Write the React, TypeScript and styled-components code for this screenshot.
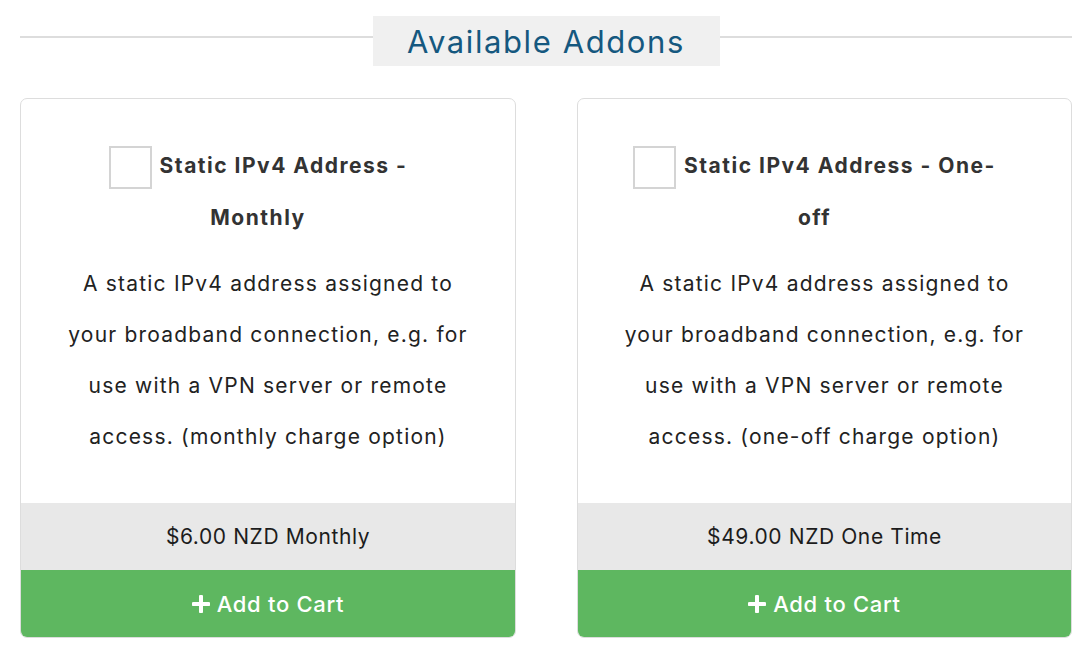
import * as React from 'react';
import styled, { createGlobalStyle } from 'styled-components';

const GlobalStyle = createGlobalStyle`
  html, body {
    margin: 0;
    padding: 0;
    background: #ffffff;
  }
  body {
    font-family: Inter, 'Open Sans', sans-serif;
    color: #222;
  }
`;

const Page = styled.div`
  width: 1086px;
  padding: 16px 14px 0 20px;
  box-sizing: border-box;
`;

const Heading = styled.div`
  display: flex;
  align-items: center;
  margin-bottom: 32px;
`;

const Rule = styled.div`
  flex: 1;
  height: 2px;
  margin-top: -8px;
  background: #dddddd;
`;

const HeadingBox = styled.h2`
  margin: 0;
  width: 347px;
  height: 50px;
  box-sizing: border-box;
  display: flex;
  align-items: center;
  justify-content: center;
  background: #f0f0f0;
  color: #15587f;
  font-size: 31px;
  font-weight: 400;
  letter-spacing: 1.6px;
`;

const Grid = styled.div`
  display: grid;
  grid-template-columns: 496px 495px;
  column-gap: 61px;
`;

const Card = styled.div`
  display: flex;
  flex-direction: column;
  height: 540px;
  box-sizing: border-box;
  border: 1px solid #dddddd;
  border-radius: 7px;
  overflow: hidden;
  background: #fff;
`;

const Body = styled.div`
  flex: 1;
  padding: 41px 36px 0;
  text-align: center;
`;

const Title = styled.label`
  display: block;
  margin: 0 auto 14px;
  width: 400px;
  padding-right: 20px;
  box-sizing: border-box;
  font-size: 21px;
  font-weight: 700;
  line-height: 52px;
  letter-spacing: 1.5px;
  color: #333;
`;

const Check = styled.span`
  display: inline-block;
  width: 43px;
  height: 43px;
  box-sizing: border-box;
  border: 2px solid #d4d4d4;
  background: #fff;
  vertical-align: middle;
  margin: 0 8px 0 0;
`;

const Description = styled.p`
  margin: 0 auto;
  max-width: 410px;
  font-size: 21px;
  line-height: 51px;
  letter-spacing: 1.2px;
  color: #222;
`;

const Price = styled.div`
  height: 67px;
  display: flex;
  align-items: center;
  justify-content: center;
  background: #e8e8e8;
  font-size: 21px;
  letter-spacing: 0.6px;
  color: #1c1c1c;
`;

const CartButton = styled.button`
  height: 67px;
  border: 0;
  display: flex;
  align-items: center;
  justify-content: center;
  gap: 7px;
  background: #5eb760;
  color: #fff;
  font-family: inherit;
  font-size: 22px;
  font-weight: 500;
  letter-spacing: 0.7px;
  cursor: pointer;
`;

const PlusIcon = () => (
  <svg width="18" height="18" viewBox="0 0 18 18" aria-hidden="true">
    <path d="M9 1.5v15M1.5 9h15" stroke="#fff" strokeWidth="4" strokeLinecap="round" />
  </svg>
);

const addons = [
  {
    title: 'Static IPv4 Address - Monthly',
    description:
      'A static IPv4 address assigned to your broadband connection, e.g. for use with a VPN server or remote access. (monthly charge option)',
    price: '$6.00 NZD Monthly',
  },
  {
    title: 'Static IPv4 Address - One-off',
    description:
      'A static IPv4 address assigned to your broadband connection, e.g. for use with a VPN server or remote access. (one-off charge option)',
    price: '$49.00 NZD One Time',
  },
];

export default function App() {
  return (
    <Page>
      <GlobalStyle />
      <Heading>
        <Rule />
        <HeadingBox>Available Addons</HeadingBox>
        <Rule />
      </Heading>
      <Grid>
        {addons.map(a => (
          <Card key={a.title}>
            <Body>
              <Title>
                <Check />
                {a.title}
              </Title>
              <Description>{a.description}</Description>
            </Body>
            <Price>{a.price}</Price>
            <CartButton>
              <PlusIcon />
              Add to Cart
            </CartButton>
          </Card>
        ))}
      </Grid>
    </Page>
  );
}
